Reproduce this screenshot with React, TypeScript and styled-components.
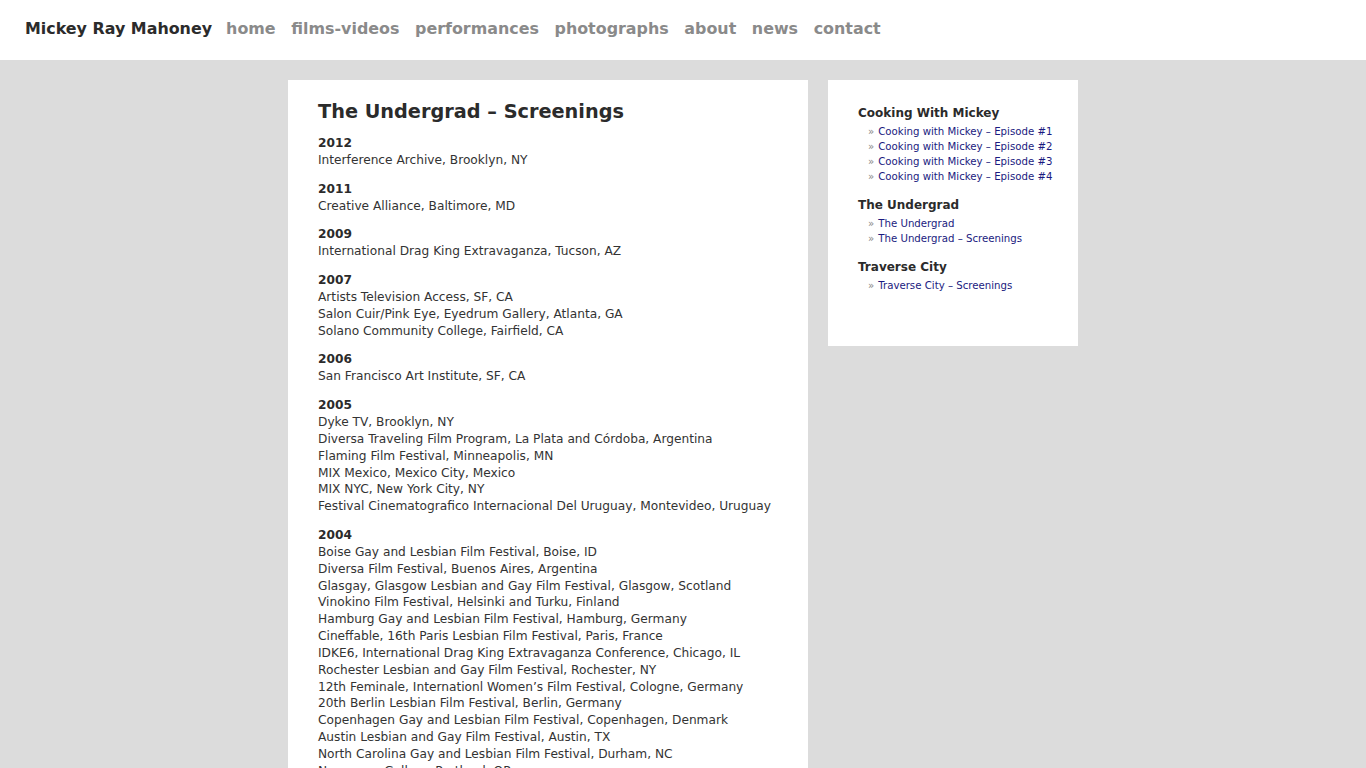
import * as React from 'react';
import styled, { createGlobalStyle } from 'styled-components';

const screenings: { year: string; places: string[] }[] = [
    { year: '2012', places: ['Interference Archive, Brooklyn, NY'] },
    { year: '2011', places: ['Creative Alliance, Baltimore, MD'] },
    { year: '2009', places: ['International Drag King Extravaganza, Tucson, AZ'] },
    {
        year: '2007',
        places: [
            'Artists Television Access, SF, CA',
            'Salon Cuir/Pink Eye, Eyedrum Gallery, Atlanta, GA',
            'Solano Community College, Fairfield, CA',
        ],
    },
    { year: '2006', places: ['San Francisco Art Institute, SF, CA'] },
    {
        year: '2005',
        places: [
            'Dyke TV, Brooklyn, NY',
            'Diversa Traveling Film Program, La Plata and Córdoba, Argentina',
            'Flaming Film Festival, Minneapolis, MN',
            'MIX Mexico, Mexico City, Mexico',
            'MIX NYC, New York City, NY',
            'Festival Cinematografico Internacional Del Uruguay, Montevideo, Uruguay',
        ],
    },
    {
        year: '2004',
        places: [
            'Boise Gay and Lesbian Film Festival, Boise, ID',
            'Diversa Film Festival, Buenos Aires, Argentina',
            'Glasgay, Glasgow Lesbian and Gay Film Festival, Glasgow, Scotland',
            'Vinokino Film Festival, Helsinki and Turku, Finland',
            'Hamburg Gay and Lesbian Film Festival, Hamburg, Germany',
            'Cineffable, 16th Paris Lesbian Film Festival, Paris, France',
            'IDKE6, International Drag King Extravaganza Conference, Chicago, IL',
            'Rochester Lesbian and Gay Film Festival, Rochester, NY',
            '12th Feminale, Internationl Women’s Film Festival, Cologne, Germany',
            '20th Berlin Lesbian Film Festival, Berlin, Germany',
            'Copenhagen Gay and Lesbian Film Festival, Copenhagen, Denmark',
            'Austin Lesbian and Gay Film Festival, Austin, TX',
            'North Carolina Gay and Lesbian Film Festival, Durham, NC',
            'Newspace Gallery, Portland, OR',
        ],
    },
];

const sidebar: { title: string; links: string[] }[] = [
    {
        title: 'Cooking With Mickey',
        links: [
            'Cooking with Mickey – Episode #1',
            'Cooking with Mickey – Episode #2',
            'Cooking with Mickey – Episode #3',
            'Cooking with Mickey – Episode #4',
        ],
    },
    { title: 'The Undergrad', links: ['The Undergrad', 'The Undergrad – Screenings'] },
    { title: 'Traverse City', links: ['Traverse City – Screenings'] },
];

const nav = ['home', 'films-videos', 'performances', 'photographs', 'about', 'news', 'contact'];

const App = () => {
    return (
        <>
            <GlobalStyle />
            <Header.Bar>
                <Header.Brand>Mickey Ray Mahoney</Header.Brand>
                {nav.map((item) => (
                    <Header.NavLink key={item} href="#">
                        {item}
                    </Header.NavLink>
                ))}
            </Header.Bar>

            <Page>
                <Content.Box>
                    <Content.Title>The Undergrad – Screenings</Content.Title>
                    {screenings.map((group) => (
                        <Content.Para key={group.year}>
                            <strong>{group.year}</strong>
                            {group.places.map((place) => (
                                <React.Fragment key={place}>
                                    <br />
                                    {place}
                                </React.Fragment>
                            ))}
                        </Content.Para>
                    ))}
                </Content.Box>

                <Side.Box>
                    {sidebar.map((section) => (
                        <Side.Section key={section.title}>
                            <Side.Heading>{section.title}</Side.Heading>
                            <Side.List>
                                {section.links.map((link) => (
                                    <Side.Item key={link}>
                                        <Side.Link href="#">{link}</Side.Link>
                                    </Side.Item>
                                ))}
                            </Side.List>
                        </Side.Section>
                    ))}
                </Side.Box>
            </Page>
        </>
    );
};

export default App;

const GlobalStyle = createGlobalStyle`
    html, body {
        margin: 0;
        padding: 0;
        background: #dcdcdc;
        font-family: "DejaVu Sans", Verdana, sans-serif;
        color: #333333;
    }
`;

const Header = {
    Bar: styled.div`
        display: flex;
        align-items: center;
        height: 60px;
        padding: 0 25px;
        background: #ffffff;
        box-sizing: border-box;
        gap: 15.6px;
    `,

    Brand: styled.span`
        font-size: 15.9px;
        font-weight: bold;
        color: #2b2b2b;
        margin-top: -4px;
        margin-right: -1.6px;
    `,

    NavLink: styled.a`
        font-size: 15.9px;
        font-weight: bold;
        color: #8a8a8a;
        text-decoration: none;
        margin-top: -4px;
    `,
};

const Page = styled.div`
    display: flex;
    justify-content: center;
    align-items: flex-start;
    gap: 20px;
    padding-top: 20px;
`;

const Content = {
    Box: styled.div`
        width: 520px;
        box-sizing: border-box;
        padding: 18px 30px 30px;
        background: #ffffff;
    `,

    Title: styled.h1`
        margin: 0 0 9px;
        font-size: 19.3px;
        line-height: 28px;
        color: #2b2b2b;
    `,

    Para: styled.p`
        margin: 0 0 12px;
        font-size: 12.2px;
        line-height: 16.85px;
        color: #333333;

        strong {
            color: #2b2b2b;
        }
    `,
};

const Side = {
    Box: styled.div`
        width: 250px;
        height: 266px;
        box-sizing: border-box;
        padding: 25px 20px 24px 30px;
        background: #ffffff;
    `,

    Section: styled.div`
        margin-bottom: 13px;
    `,

    Heading: styled.h3`
        margin: 0 0 2px;
        font-size: 12px;
        line-height: 17px;
        color: #2b2b2b;
    `,

    List: styled.ul`
        list-style: none;
        margin: 0;
        padding: 0 0 0 10px;
    `,

    Item: styled.li`
        font-size: 10.2px;
        line-height: 15px;

        &::before {
            content: '»';
            color: #888888;
            margin-right: 4px;
        }
    `,

    Link: styled.a`
        color: #1a1a80;
        text-decoration: none;
    `,
};
